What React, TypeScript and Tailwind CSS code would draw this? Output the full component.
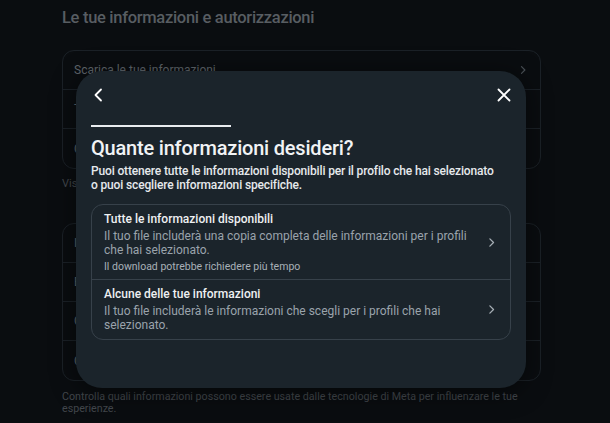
import React from 'react';

const ChevronRight = ({ className = '' }: { className?: string }) => (
  <svg viewBox="0 0 16 16" className={className} fill="none" stroke="currentColor" strokeWidth={1.6} strokeLinecap="round" strokeLinejoin="round">
    <path d="M6 3.5 10.5 8 6 12.5" />
  </svg>
);

const BgRow = ({ label, last = false }: { label: string; last?: boolean }) => (
  <div className={`h-[39px] flex items-center justify-between px-[11px] ${last ? '' : 'border-b border-[#1b2127]'}`}>
    <span className="text-[12px] text-[#5f656b]">{label}</span>
    <ChevronRight className="w-[12px] h-[12px] text-[#4a5056]" />
  </div>
);

const Option = ({ title, desc, note, last = false }: { title: string; desc: string; note?: string; last?: boolean }) => (
  <div className={`flex items-center pl-[12px] pr-[12px] ${last ? 'pt-[7px] pb-[7px]' : 'pt-[7px] pb-[6px] border-b border-[#37414a]'}`}>
    <div className="flex-1 pr-[10px]">
      <div className="text-[12px] leading-[15px] font-medium text-[#eef0f2]">{title}</div>
      <div className="text-[12px] leading-[14px] text-[#9aa3ab] mt-[2px]">{desc}</div>
      {note && <div className="text-[10.5px] leading-[13px] text-[#a8b0b7] mt-[3px]">{note}</div>}
    </div>
    <ChevronRight className="w-[13px] h-[13px] text-[#a6aeb5]" />
  </div>
);

export default function App() {
  return (
    <div className="relative w-full h-[423px] overflow-hidden bg-[#0a0d10] font-['Roboto',sans-serif]">
      {/* page behind the dialog */}
      <div className="pl-[62px] pr-[69px] pt-[7px]">
        <h1 className="text-[16.5px] leading-[22px] tracking-[-0.3px] font-medium text-[#585d62]">Le tue informazioni e autorizzazioni</h1>
        <div className="mt-[21px] rounded-[12px] border border-[#1b2127]">
          <BgRow label="Scarica le tue informazioni" />
          <BgRow label="Trasferisci una copia delle tue informazioni" />
          <BgRow label="Cerca la tua attività" last />
        </div>
        <p className="mt-[8px] text-[11px] leading-[14px] text-[#42474c]">Visualizza e gestisci le tue informazioni.</p>
        <div className="mt-[32px] rounded-[12px] border border-[#1b2127]">
          <BgRow label="Informazioni" />
          <BgRow label="Esperienze pubblicitarie" />
          <BgRow label="Cronologia delle ricerche" />
          <BgRow label="Cookie" last />
        </div>
        <p className="mt-[10px] text-[10.7px] leading-[12px] text-[#42474c]">Controlla quali informazioni possono essere usate dalle tecnologie di Meta per influenzare le tue esperienze.</p>
      </div>

      {/* dialog */}
      <div className="absolute left-[76px] top-[71px] w-[450px] h-[317px] rounded-[26px] bg-[#1b242b] shadow-[0_4px_24px_rgba(0,0,0,0.5)] px-[15px] pt-[16px]">
        <div className="flex items-center justify-between h-[16px]">
          <svg viewBox="0 0 16 16" className="w-[16px] h-[16px] text-white" fill="none" stroke="currentColor" strokeWidth={1.8} strokeLinecap="round" strokeLinejoin="round">
            <path d="M10 2.5 4.5 8 10 13.5" />
          </svg>
          <svg viewBox="0 0 16 16" className="w-[16px] h-[16px] text-white mr-[-1px]" fill="none" stroke="currentColor" strokeWidth={1.8} strokeLinecap="round">
            <path d="M2.5 2.5 13.5 13.5M13.5 2.5 2.5 13.5" />
          </svg>
        </div>
        <div className="mt-[22px] w-[140px] h-[2px] bg-[#e9ecef]" />
        <h2 className="mt-[9px] text-[20px] leading-[24px] tracking-[-0.2px] font-medium text-[#f1f3f5]">Quante informazioni desideri?</h2>
        <p className="mt-[4px] w-[406px] text-[12px] leading-[14px] tracking-[-0.15px] font-medium text-[#e6e9ec]">
          Puoi ottenere tutte le informazioni disponibili per il profilo che hai selezionato o puoi scegliere informazioni specifiche.
        </p>
        <div className="mt-[12px] rounded-[12px] border border-[#37414a]">
          <Option
            title="Tutte le informazioni disponibili"
            desc="Il tuo file includerà una copia completa delle informazioni per i profili che hai selezionato."
            note="Il download potrebbe richiedere più tempo"
          />
          <Option
            title="Alcune delle tue informazioni"
            desc="Il tuo file includerà le informazioni che scegli per i profili che hai selezionato."
            last
          />
        </div>
      </div>
    </div>
  );
}
